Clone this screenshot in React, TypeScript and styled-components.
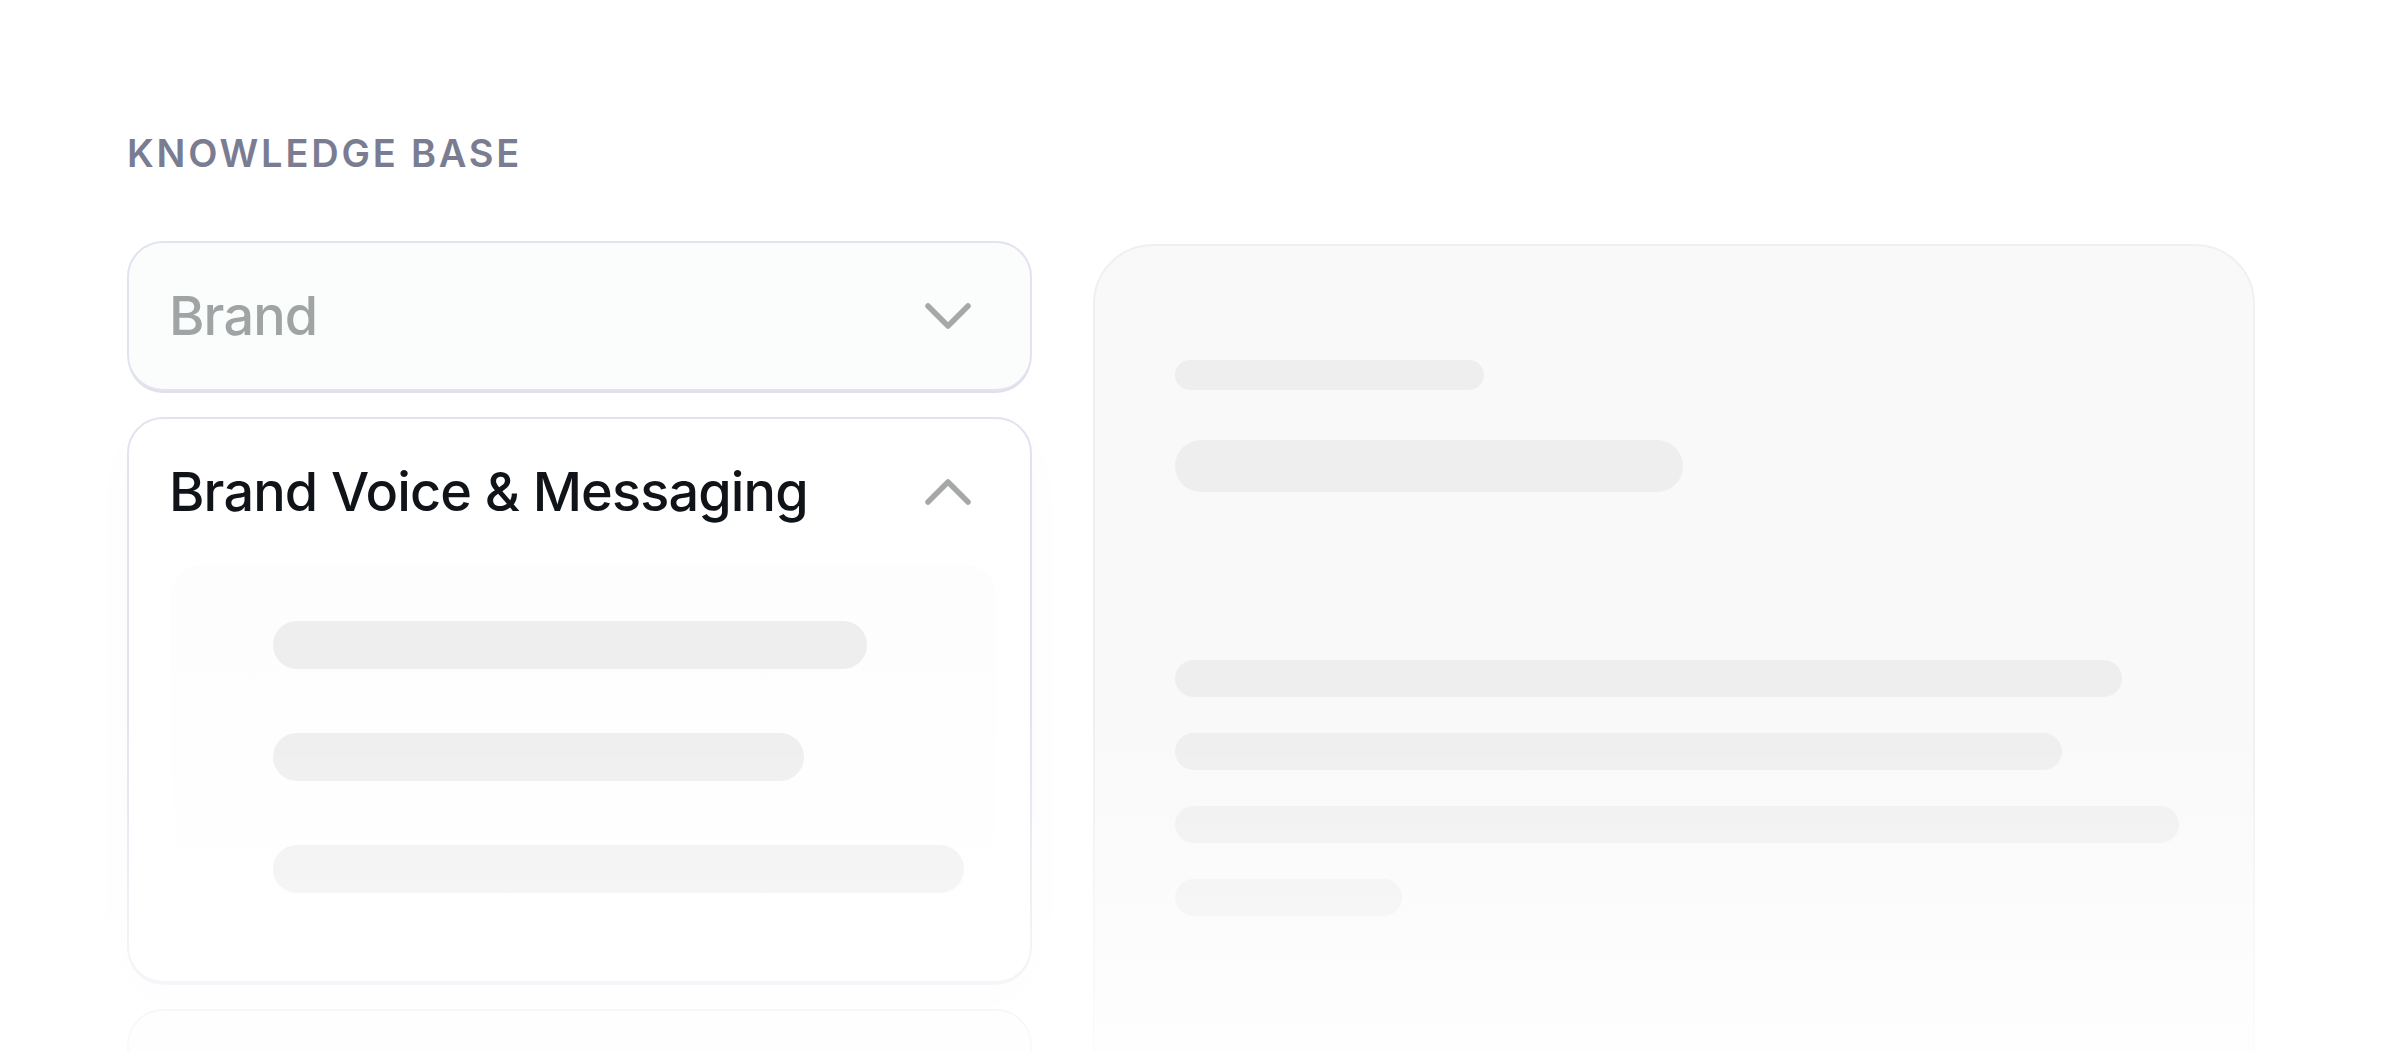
import React from 'react';
import styled, { createGlobalStyle } from 'styled-components';

const GlobalStyle = createGlobalStyle`
  html, body {
    margin: 0;
    padding: 0;
    background: #ffffff;
    overflow: hidden;
  }
  body {
    font-family: Inter, "Noto Sans", "Liberation Sans", sans-serif;
  }
`;

const Page = styled.div`
  position: relative;
  width: 2384px;
  height: 1052px;
  overflow: hidden;
  box-sizing: border-box;
  padding: 134px 0 0 127px;
  background: #ffffff;
`;

const SectionLabel = styled.div`
  font-size: 38px;
  line-height: 38px;
  font-weight: 600;
  letter-spacing: 2.8px;
  color: #7a7d92;
  text-transform: uppercase;
`;

const Columns = styled.div`
  display: flex;
  flex-direction: row;
  align-items: flex-start;
  gap: 61px;
  margin-top: 69px;
`;

const LeftColumn = styled.div`
  display: flex;
  flex-direction: column;
  gap: 26px;
  width: 905px;
  flex-shrink: 0;
`;

interface CardProps {
  open?: boolean
}

const Card = styled.div<CardProps>`
  box-sizing: border-box;
  width: 100%;
  min-height: 150px;
  border: 2px solid #e3e2ee;
  border-radius: 36px;
  background: ${p => p.open ? '#ffffff' : '#fbfcfc'};
  box-shadow: ${p => p.open
    ? '0 3px 0 -1px #e7e6f0, 0 20px 50px rgba(40, 40, 60, 0.02)'
    : '0 3px 0 -1px #e0dfeb'};
  display: flex;
  flex-direction: column;
  ${p => p.open && `height: 566px;`}
`;

const CardHeader = styled.div`
  display: flex;
  flex-direction: row;
  align-items: center;
  justify-content: space-between;
  height: 146px;
  flex-shrink: 0;
  padding: 0 59px 0 40px;
`;

const CardTitle = styled.span<CardProps>`
  font-size: 54px;
  font-weight: 500;
  letter-spacing: -0.85px;
  color: ${p => p.open ? '#101418' : '#a1a4a4'};
  line-height: 1;
`;

const Chevron = styled.svg`
  width: 46px;
  height: 26px;
  flex-shrink: 0;
`;

const CardBody = styled.div`
  flex: 1;
  margin: 0 34px 22px 42px;
  border-radius: 30px;
  background: linear-gradient(180deg, #fdfdfd 0%, #ffffff 100%);
  padding: 56px 0 0 102px;
  display: flex;
  flex-direction: column;
  gap: 64px;
`;

const SkeletonBar = styled.div<{ w: number; h: number }>`
  width: ${p => p.w}px;
  height: ${p => p.h}px;
  border-radius: ${p => p.h / 2}px;
  background: #eeeeee;
  flex-shrink: 0;
`;

const PreviewPanel = styled.div`
  box-sizing: border-box;
  margin-top: 3px;
  width: 1162px;
  height: 900px;
  flex-shrink: 0;
  background: #f9f9f9;
  border: 2px solid #f0f0f0;
  border-radius: 60px;
  padding: 114px 0 0 80px;
  display: flex;
  flex-direction: column;
`;

const PreviewHead = styled.div`
  display: flex;
  flex-direction: column;
  gap: 50px;
`;

const PreviewLines = styled.div`
  display: flex;
  flex-direction: column;
  gap: 36px;
  margin-top: 168px;
`;

const BottomFade = styled.div`
  position: absolute;
  left: 0;
  right: 0;
  bottom: 0;
  height: 332px;
  pointer-events: none;
  background: linear-gradient(180deg, rgba(255, 255, 255, 0) 0%, rgba(255, 255, 255, 0.84) 100%);
`;

const ChevronIcon = ({ up }: { up?: boolean }) => (
  <Chevron viewBox="0 0 46 26" fill="none">
    <polyline
      points={up ? '3,23 23,3 43,23' : '3,3 23,23 43,3'}
      stroke="#a6a8a8"
      strokeWidth="5.5"
      strokeLinecap="round"
      strokeLinejoin="round"
    />
  </Chevron>
);

const bodyBars = [594, 531, 691];
const previewLines = [947, 887, 1004, 227];

export default function App() {
  return (
    <Page>
      <GlobalStyle />
      <SectionLabel>Knowledge Base</SectionLabel>
      <Columns>
        <LeftColumn>
          <Card>
            <CardHeader>
              <CardTitle>Brand</CardTitle>
              <ChevronIcon />
            </CardHeader>
          </Card>
          <Card open>
            <CardHeader>
              <CardTitle open>Brand Voice &amp; Messaging</CardTitle>
              <ChevronIcon up />
            </CardHeader>
            <CardBody>
              {bodyBars.map((w, i) => (
                <SkeletonBar key={i} w={w} h={48} />
              ))}
            </CardBody>
          </Card>
          <Card />
        </LeftColumn>
        <PreviewPanel>
          <PreviewHead>
            <SkeletonBar w={309} h={30} />
            <SkeletonBar w={508} h={52} />
          </PreviewHead>
          <PreviewLines>
            {previewLines.map((w, i) => (
              <SkeletonBar key={i} w={w} h={37} />
            ))}
          </PreviewLines>
        </PreviewPanel>
      </Columns>
      <BottomFade />
    </Page>
  );
}
